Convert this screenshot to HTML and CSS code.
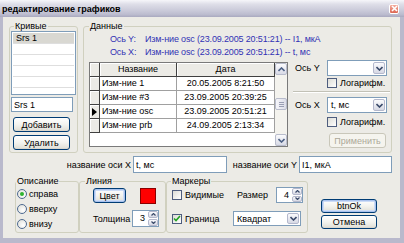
FILE: index.html
```html
<!DOCTYPE html>
<html lang="ru">
<head>
    <meta charset="UTF-8">
    <title>редактирование графиков</title>
    <link rel="stylesheet" href="styles.css">
</head>
<body>

<div class="window">
    <div class="titlebar">
        <span class="title">редактирование графиков</span>
        <span class="close">
            <svg width="7" height="7" viewBox="0 0 7 7"><path d="M1 1L6 6M6 1L1 6" stroke="#fff" stroke-width="1.6"/></svg>
        </span>
    </div>

    <div class="client">
        <div class="top-row">
            <fieldset class="group curves">
                <legend>Кривые</legend>
                <div class="listbox">
                    <div class="item selected">Srs 1</div>
                    <div class="item"></div>
                    <div class="item"></div>
                    <div class="item"></div>
                    <div class="item"></div>
                </div>
                <input class="edit curve-name" type="text" value="Srs 1">
                <button class="btn btn-add">Добавить</button>
                <button class="btn btn-del">Удалить</button>
            </fieldset>

            <fieldset class="group data">
                <legend>Данные</legend>
                <div class="info">
                    <div class="info-line"><span class="info-label">Ось Y:</span><span>Изм-ние osc (23.09.2005 20:51:21) -- I1, мкА</span></div>
                    <div class="info-line"><span class="info-label">Ось X:</span><span>Изм-ние osc (23.09.2005 20:51:21) -- t, мс</span></div>
                </div>
                <div class="data-row">
                    <div class="grid">
                        <div class="grid-table">
                            <div class="grid-row head">
                                <div class="cell ind"></div>
                                <div class="cell name">Название</div>
                                <div class="cell date">Дата</div>
                            </div>
                            <div class="grid-row">
                                <div class="cell ind"></div>
                                <div class="cell name">Изм-ние 1</div>
                                <div class="cell date">20.05.2005 8:21:50</div>
                            </div>
                            <div class="grid-row">
                                <div class="cell ind"></div>
                                <div class="cell name">Изм-ние #3</div>
                                <div class="cell date">23.09.2005 20:39:25</div>
                            </div>
                            <div class="grid-row">
                                <div class="cell ind"><svg width="5" height="8" viewBox="0 0 5 8"><polygon points="0,0 5,4 0,8" fill="#000"/></svg></div>
                                <div class="cell name">Изм-ние osc</div>
                                <div class="cell date">23.09.2005 20:51:21</div>
                            </div>
                            <div class="grid-row">
                                <div class="cell ind"></div>
                                <div class="cell name">Изм-ние prb</div>
                                <div class="cell date">24.09.2005 2:13:34</div>
                            </div>
                        </div>
                        <div class="scrollbar">
                            <div class="sb-btn"><svg width="7" height="5" viewBox="0 0 7 5"><path d="M0.5 4L3.5 1L6.5 4" fill="none" stroke="#4d6185" stroke-width="1.6"/></svg></div>
                            <div class="sb-track">
                                <div class="sb-thumb"><span></span><span></span><span></span></div>
                            </div>
                            <div class="sb-btn"><svg width="7" height="5" viewBox="0 0 7 5"><path d="M0.5 1L3.5 4L6.5 1" fill="none" stroke="#4d6185" stroke-width="1.6"/></svg></div>
                        </div>
                    </div>

                    <div class="axes">
                        <div class="axis-row">
                            <span class="axis-label">Ось Y</span>
                            <div class="combo axis-combo">
                                <span class="combo-text"></span>
                                <span class="combo-btn"><svg width="7" height="5" viewBox="0 0 7 5"><path d="M0.5 1L3.5 4L6.5 1" fill="none" stroke="#3a4a6a" stroke-width="1.6"/></svg></span>
                            </div>
                        </div>
                        <label class="check axis-check"><span class="box"></span>Логарифм.</label>
                        <div class="separator"></div>
                        <div class="axis-row second">
                            <span class="axis-label">Ось X</span>
                            <div class="combo axis-combo">
                                <span class="combo-text">t, мс</span>
                                <span class="combo-btn"><svg width="7" height="5" viewBox="0 0 7 5"><path d="M0.5 1L3.5 4L6.5 1" fill="none" stroke="#3a4a6a" stroke-width="1.6"/></svg></span>
                            </div>
                        </div>
                        <label class="check axis-check second"><span class="box"></span>Логарифм.</label>
                        <button class="btn btn-apply" disabled>Применить</button>
                    </div>
                </div>
            </fieldset>
        </div>

        <div class="names-row">
            <span class="name-label first">название оси X</span>
            <input class="edit name-x" type="text" value="t, мс">
            <span class="name-label">название оси Y</span>
            <input class="edit name-y" type="text" value="I1, мкА">
        </div>

        <div class="bottom-row">
            <fieldset class="group legend-pos">
                <legend>Описание</legend>
                <label class="radio"><span class="circle checked"></span>справа</label>
                <label class="radio"><span class="circle"></span>вверху</label>
                <label class="radio"><span class="circle"></span>внизу</label>
            </fieldset>

            <fieldset class="group line">
                <legend>Линия</legend>
                <div class="line-color">
                    <button class="btn btn-color">Цвет</button>
                    <span class="swatch"></span>
                </div>
                <div class="line-width">
                    <span class="width-label">Толщина</span>
                    <div class="spin">
                        <span class="spin-value">3</span>
                        <span class="spin-btns">
                            <span class="spin-btn"><svg width="5" height="3" viewBox="0 0 5 3"><path d="M0.5 2.5L2.5 0.5L4.5 2.5" fill="none" stroke="#3a4a6a" stroke-width="1.2"/></svg></span>
                            <span class="spin-btn"><svg width="5" height="3" viewBox="0 0 5 3"><path d="M0.5 0.5L2.5 2.5L4.5 0.5" fill="none" stroke="#3a4a6a" stroke-width="1.2"/></svg></span>
                        </span>
                    </div>
                </div>
            </fieldset>

            <fieldset class="group markers">
                <legend>Маркеры</legend>
                <div class="marker-row">
                    <label class="check visible-check"><span class="box"></span>Видимые</label>
                    <span class="size-label">Размер</span>
                    <div class="spin">
                        <span class="spin-value">4</span>
                        <span class="spin-btns">
                            <span class="spin-btn"><svg width="5" height="3" viewBox="0 0 5 3"><path d="M0.5 2.5L2.5 0.5L4.5 2.5" fill="none" stroke="#3a4a6a" stroke-width="1.2"/></svg></span>
                            <span class="spin-btn"><svg width="5" height="3" viewBox="0 0 5 3"><path d="M0.5 0.5L2.5 2.5L4.5 0.5" fill="none" stroke="#3a4a6a" stroke-width="1.2"/></svg></span>
                        </span>
                    </div>
                </div>
                <div class="marker-row second">
                    <label class="check border-check"><span class="box checked"><svg width="8" height="7" viewBox="0 0 8 7"><path d="M1 3.5L3 5.5L7 1" fill="none" stroke="#21a121" stroke-width="1.6"/></svg></span>Граница</label>
                    <div class="combo shape-combo">
                        <span class="combo-text">Квадрат</span>
                        <span class="combo-btn"><svg width="7" height="5" viewBox="0 0 7 5"><path d="M0.5 1L3.5 4L6.5 1" fill="none" stroke="#3a4a6a" stroke-width="1.6"/></svg></span>
                    </div>
                </div>
            </fieldset>

            <div class="dialog-buttons">
                <button class="btn btn-default">btnOk</button>
                <button class="btn">Отмена</button>
            </div>
        </div>
    </div>
</div>

</body>
</html>
```

FILE: styles.css
```css
* {
    box-sizing: border-box;
}
body {
    margin: 0;
    font-family: "Liberation Sans", Arial, sans-serif;
    font-size: 9px;
    color: #000;
}
.window {
    width: 404px;
    height: 243px;
    background: #b9b9cc;
    display: flex;
    flex-direction: column;
    overflow: hidden;
}

/* title bar */
.titlebar {
    height: 17px;
    display: flex;
    align-items: center;
    justify-content: space-between;
    padding: 0 5px 0 2px;
    background: linear-gradient(to bottom, #f6f6fa 0%, #dedee8 25%, #cbcbda 60%, #bcbccf 85%, #a9a9bf 100%);
}
.title {
    font-weight: bold;
    font-size: 9px;
}
.close {
    width: 10px;
    height: 10px;
    border-radius: 2px;
    background: linear-gradient(to bottom, #f4ac9e, #dc6652);
    border: 1px solid #fff;
    display: flex;
    align-items: center;
    justify-content: center;
}

.client {
    flex: 1;
    margin: 0 4px 5px 3px;
    background: #ecebe6;
    padding: 4px 0 0 6px;
}

/* group boxes */
fieldset.group {
    margin: 0;
    padding: 0;
    border: 1px solid #d0d0bf;
    border-radius: 3px;
    min-width: 0;
}
fieldset.group legend {
    padding: 0 1px;
    height: 10px;
    line-height: 10px;
    font-size: 9px;
}

.top-row {
    display: flex;
    gap: 5px;
    height: 132px;
}
.curves {
    width: 69px;
    height: 132px;
}
.curves legend {
    margin-left: 4px;
}
.listbox {
    margin-left: 1px;
    width: 65px;
    height: 64px;
    border: 1px solid #7f9db9;
    background: #fff;
    padding: 1px 1px 0 1px;
    overflow: hidden;
}
.listbox .item {
    height: 11px;
    line-height: 10px;
    padding-left: 3px;
    border-bottom: 1px solid #dedede;
}
.listbox .item.selected {
    background: #d9d8d2;
}
.edit {
    display: block;
    height: 15px;
    border: 1px solid #7f9db9;
    background: #fff;
    font-family: inherit;
    font-size: 9px;
    padding: 0 2px;
    margin: 0;
    outline: none;
}
.curve-name {
    margin: 2px 0 0 1px;
    width: 62px;
}
.btn {
    display: block;
    height: 15px;
    padding: 0;
    margin: 0;
    font-family: inherit;
    font-size: 9px;
    color: #000;
    border: 1px solid #003c74;
    border-radius: 3px;
    background: linear-gradient(to bottom, #ffffff 0%, #f3f3ef 50%, #e3e2da 90%, #d6d0c5 100%);
}
.btn-add {
    margin: 5px 0 0 3px;
    width: 57px;
}
.btn-del {
    margin: 3px 0 0 3px;
    width: 57px;
}

.data {
    width: 309px;
    height: 132px;
}
.data legend {
    margin-left: 5px;
}
.info {
    margin-top: 2px;
    padding-left: 26px;
    color: #3232b4;
}
.info-line {
    height: 13px;
    line-height: 13px;
    display: flex;
    letter-spacing: -0.15px;
}
.info-label {
    width: 35px;
}
.data-row {
    display: flex;
    gap: 5px;
    margin: 1px 0 0 5px;
}

/* data grid */
.grid {
    width: 199px;
    height: 85px;
    margin-top: 2px;
    border: 1px solid #7a7a7a;
    background: #fff;
    display: flex;
}
.grid-table {
    width: 185px;
}
.grid-row {
    display: flex;
    height: 14px;
}
.cell {
    height: 14px;
    line-height: 13px;
    border-right: 1px solid #a0a0a0;
    border-bottom: 1px solid #a0a0a0;
    white-space: nowrap;
    overflow: hidden;
}
.cell.ind {
    width: 10px;
    background: #ecebe6;
    border-color: #404040;
    box-shadow: inset 1px 1px #fff;
    display: flex;
    align-items: center;
    justify-content: center;
}
.cell.name {
    width: 77px;
    padding-left: 2px;
}
.cell.date {
    width: 98px;
    text-align: center;
}
.grid-row.head .cell {
    background: #ecebe6;
    border-color: #404040;
    box-shadow: inset 1px 1px #fff;
    text-align: center;
    padding-left: 0;
}
.scrollbar {
    width: 12px;
    display: flex;
    flex-direction: column;
    background: #f4f3ee;
}
.sb-btn {
    height: 12px;
    border: 1px solid #b8bccc;
    border-radius: 2px;
    background: linear-gradient(to bottom, #fbfbfd, #d8dae6);
    display: flex;
    align-items: center;
    justify-content: center;
}
.sb-track {
    flex: 1;
    padding-top: 23px;
}
.sb-thumb {
    height: 12px;
    border: 1px solid #b8bccc;
    border-radius: 2px;
    background: linear-gradient(to right, #f6f6fa, #dcdde8);
    display: flex;
    flex-direction: column;
    justify-content: center;
    align-items: center;
    gap: 1px;
}
.sb-thumb span {
    width: 5px;
    height: 1px;
    background: #9a9eb4;
}

/* axis settings */
.axes {
    width: 97px;
    display: flex;
    flex-direction: column;
}
.axis-row {
    display: flex;
    align-items: center;
    height: 16px;
}
.axis-row.second {
    margin-top: 4px;
}
.axis-label {
    width: 34px;
    padding-left: 2px;
}
.combo {
    height: 16px;
    border: 1px solid #7f9db9;
    background: #fff;
    display: flex;
    padding: 1px;
}
.axis-combo {
    width: 60px;
}
.combo-text {
    flex: 1;
    line-height: 12px;
    padding-left: 2px;
}
.combo-btn {
    width: 12px;
    border: 1px solid #b4b8cc;
    border-radius: 2px;
    background: linear-gradient(to bottom, #fbfbfd, #d6d8e4);
    display: flex;
    align-items: center;
    justify-content: center;
}
.check {
    display: flex;
    align-items: center;
    height: 10px;
    line-height: 10px;
}
.box {
    width: 10px;
    height: 10px;
    margin-right: 3px;
    border: 1px solid #4e5d7e;
    background: linear-gradient(135deg, #dcdcd6, #fff);
    display: flex;
    align-items: center;
    justify-content: center;
}
.axis-check {
    margin: 2px 0 0 34px;
}
.axis-check.second {
    margin-top: 4px;
}
.separator {
    margin-top: 3px;
    height: 2px;
    border-top: 1px solid #c2c1b6;
    border-bottom: 1px solid #fff;
}
.btn-apply {
    margin: 6px 0 0 36px;
    width: 57px;
    color: #aca899;
    border-color: #c9c7ba;
    background: #f5f4ee;
}

/* axis names */
.names-row {
    display: flex;
    align-items: center;
    height: 17px;
    margin: 3px 0 0 -6px;
}
.name-label {
    width: 72px;
    text-align: right;
    padding-right: 2px;
}
.name-label.first {
    width: 130px;
}
.name-x {
    width: 94px;
    height: 17px;
}
.name-y {
    width: 93px;
    height: 17px;
}

/* bottom groups */
.bottom-row {
    display: flex;
    margin: 3px 0 0 6px;
    height: 57px;
}
.legend-pos {
    width: 64px;
    height: 57px;
}
.legend-pos legend {
    margin-left: 0;
}
.radio {
    display: flex;
    align-items: center;
    height: 15px;
    padding-left: 1px;
}
.circle {
    width: 10px;
    height: 10px;
    border-radius: 50%;
    border: 1px solid #4e6a90;
    background: radial-gradient(circle at 65% 65%, #fff, #dcdcd6);
    margin-right: 2px;
    display: flex;
    align-items: center;
    justify-content: center;
}
.circle.checked::after {
    content: "";
    width: 4px;
    height: 4px;
    border-radius: 50%;
    background: #2fb32f;
}

.line {
    width: 87px;
    height: 57px;
    margin-left: 4px;
}
.line legend {
    margin-left: 5px;
}
.line-color {
    display: flex;
    align-items: center;
    margin: 1px 0 0 13px;
    height: 17px;
}
.btn-color {
    width: 33px;
}
.btn-default,
.btn-color {
    box-shadow: inset 0 0 0 1px #a9c2ee, inset 0 0 0 2px #cddcf6;
}
.swatch {
    width: 16px;
    height: 16px;
    margin-left: 14px;
    background: #f00;
    border: 1px solid #8a0000;
}
.line-width {
    display: flex;
    align-items: center;
    margin: 6px 0 0 13px;
}
.width-label {
    width: 39px;
}
.spin {
    display: flex;
    height: 17px;
    border: 1px solid #7f9db9;
    background: #fff;
}
.spin-value {
    width: 14px;
    text-align: right;
    line-height: 15px;
    padding-right: 2px;
}
.spin-btns {
    width: 11px;
    display: flex;
    flex-direction: column;
    gap: 1px;
    padding: 0 0 0 1px;
}
.spin-btn {
    flex: 1;
    border: 1px solid #b4b8cc;
    border-radius: 2px;
    background: linear-gradient(to bottom, #fbfbfd, #d6d8e4);
    display: flex;
    align-items: center;
    justify-content: center;
}

.markers {
    width: 142px;
    height: 57px;
    margin-left: 5px;
}
.markers legend {
    margin-left: 4px;
}
.marker-row {
    display: flex;
    align-items: center;
    margin: 1px 0 0 5px;
    height: 16px;
}
.marker-row.second {
    margin-top: 8px;
    height: 15px;
}
.visible-check {
    width: 65px;
}
.size-label {
    width: 39px;
}
.markers .spin {
    height: 16px;
}
.markers .spin-value {
    line-height: 14px;
}
.border-check {
    width: 61px;
}
.shape-combo {
    width: 68px;
    height: 15px;
}

.dialog-buttons {
    margin: 23px 0 0 13px;
    display: flex;
    flex-direction: column;
    gap: 2px;
}
.dialog-buttons .btn {
    width: 56px;
    height: 14px;
}
```
